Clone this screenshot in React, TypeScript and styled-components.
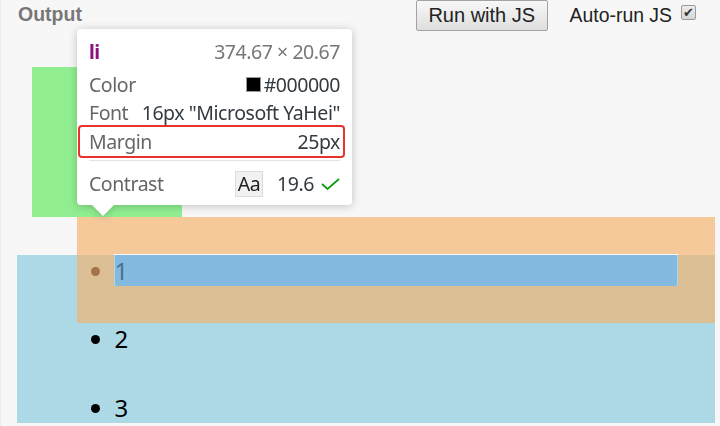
import React from "react";
import styled, { createGlobalStyle, css } from "styled-components";

const GlobalStyle = createGlobalStyle`
  html, body { margin: 0; padding: 0; background: #f7f7f7; }
  body { font-family: "Liberation Sans", Arial, sans-serif; }
  * { box-sizing: border-box; }
`;

const Page = styled.div`
  position: relative;
  width: 720px;
  height: 426px;
  overflow: hidden;
  padding: 0 5.5px 0 16px;
  background: #f7f7f7;
  border-left: 1px solid #ececec;
`;

const Header = styled.header`
  display: flex;
  align-items: center;
  height: 31px;
  margin-right: 18.5px;
`;

const Title = styled.h2`
  margin: -3px 0 0 1px;
  font: bold 19.5px/22px "Liberation Sans", Arial, sans-serif;
  color: #777;
`;

const Controls = styled.div`
  margin-left: auto;
  display: flex;
  align-items: center;
  height: 100%;
`;

const RunButton = styled.button`
  height: 31px;
  padding: 0 11.5px;
  font: 20px "Liberation Sans", Arial, sans-serif;
  color: #222;
  background: linear-gradient(#f8f8f8, #dedede);
  border: 1px solid #a3a3a3;
  border-radius: 2px;
`;

const AutoLabel = styled.span`
  margin-left: 22px;
  font: 19.4px "Liberation Sans", Arial, sans-serif;
  color: #222;
`;

const CheckBox = styled.span`
  align-self: flex-start;
  margin: 5px 0 0 9px;
  width: 15px;
  height: 15px;
  border: 1px solid #9a9a9a;
  border-radius: 2px;
  background: linear-gradient(#ececec, #d6d6d6);
  display: flex;
  align-items: center;
  justify-content: center;
  font: 13px/1 "DejaVu Sans", sans-serif;
  color: #333;
`;

const GreenBox = styled.div`
  margin: 36px 0 0 15px;
  width: 150px;
  height: 150px;
  background: #90ee90;
`;

const List = styled.ul`
  margin: 0;
  padding: 0 0 0 60px;
  background: lightblue;
  list-style: disc;
  font: 24px/31px "Noto Sans", "Open Sans", sans-serif;
  color: #000;
`;

const Item = styled.li<{ $inspected?: boolean }>`
  margin: 37.5px;
  position: relative;
  ${(p) =>
    p.$inspected &&
    css`
      &::before {
        content: "";
        position: absolute;
        inset: -37.5px;
        border: 37.5px solid rgba(246, 178, 107, 0.66);
      }
      &::after {
        content: "";
        position: absolute;
        inset: 0;
        background: rgba(111, 168, 220, 0.66);
      }
    `}
`;

const Tooltip = styled.div`
  position: absolute;
  left: 76px;
  top: 29px;
  width: 275px;
  z-index: 5;
  background: #fff;
  border-radius: 4px;
  padding: 8px 12px 7px;
  font: 19.5px "Noto Sans", "Open Sans", sans-serif;
  letter-spacing: -0.45px;
  filter: drop-shadow(0 1px 4px rgba(0, 0, 0, 0.22));
  &::after {
    content: "";
    position: absolute;
    left: 15px;
    top: 100%;
    border-left: 11px solid transparent;
    border-right: 11px solid transparent;
    border-top: 11px solid #fff;
  }
`;

const TitleRow = styled.div`
  display: flex;
  justify-content: space-between;
  align-items: center;
  height: 28px;
`;

const Tag = styled.span`
  color: #881280;
  font-weight: bold;
`;

const Dim = styled.span`
  color: #777;
`;

const Section = styled.div`
  margin-top: 5px;
`;

const Row = styled.div<{ $highlight?: boolean }>`
  display: flex;
  justify-content: space-between;
  align-items: center;
  height: 28.5px;
  position: relative;
  ${(p) =>
    p.$highlight &&
    css`
      &::before {
        content: "";
        position: absolute;
        left: -11px;
        right: -5px;
        top: -2px;
        bottom: -2px;
        border: 2px solid #e8322c;
        border-radius: 4px;
      }
    `}
`;

const Label = styled.span`
  color: #666;
`;

const Value = styled.span`
  color: #333a40;
  display: inline-flex;
  align-items: center;
`;

const Swatch = styled.span`
  width: 15px;
  height: 15px;
  background: #000;
  border: 1px solid #999;
  margin-right: 3px;
`;

const Separator = styled.div`
  height: 1px;
  background: #e2e2e2;
  margin-top: 4px;
`;

const ContrastRow = styled(Row)`
  height: 28px;
  margin-top: 9px;
`;

const AaBox = styled.span`
  width: 28px;
  height: 26px;
  background: #f1f1f1;
  border: 1px solid #dcdcdc;
  display: inline-flex;
  align-items: center;
  justify-content: center;
  color: #222;
  margin-right: 14px;
`;

const CheckMark = () => (
  <svg width="19" height="12" viewBox="0 0 19 12" style={{ marginLeft: 7 }}>
    <polyline points="1,6 6.5,11 18,1" fill="none" stroke="#0b9a0b" strokeWidth="1.7" />
  </svg>
);

export default function App() {
  return (
    <>
      <GlobalStyle />
      <Page>
        <Header>
          <Title>Output</Title>
          <Controls>
            <RunButton>Run with JS</RunButton>
            <AutoLabel>Auto-run JS</AutoLabel>
            <CheckBox>✔</CheckBox>
          </Controls>
        </Header>
        <GreenBox />
        <List>
          <Item $inspected>1</Item>
          <Item>2</Item>
          <Item>3</Item>
        </List>
        <Tooltip>
          <TitleRow>
            <Tag>li</Tag>
            <Dim>374.67 × 20.67</Dim>
          </TitleRow>
          <Section>
            <Row>
              <Label>Color</Label>
              <Value>
                <Swatch />
                #000000
              </Value>
            </Row>
            <Row>
              <Label>Font</Label>
              <Value>16px "Microsoft YaHei"</Value>
            </Row>
            <Row $highlight>
              <Label>Margin</Label>
              <Value>25px</Value>
            </Row>
          </Section>
          <Separator />
          <ContrastRow>
            <Label>Contrast</Label>
            <Value>
              <AaBox>Aa</AaBox>
              19.6
              <CheckMark />
            </Value>
          </ContrastRow>
        </Tooltip>
      </Page>
    </>
  );
}
